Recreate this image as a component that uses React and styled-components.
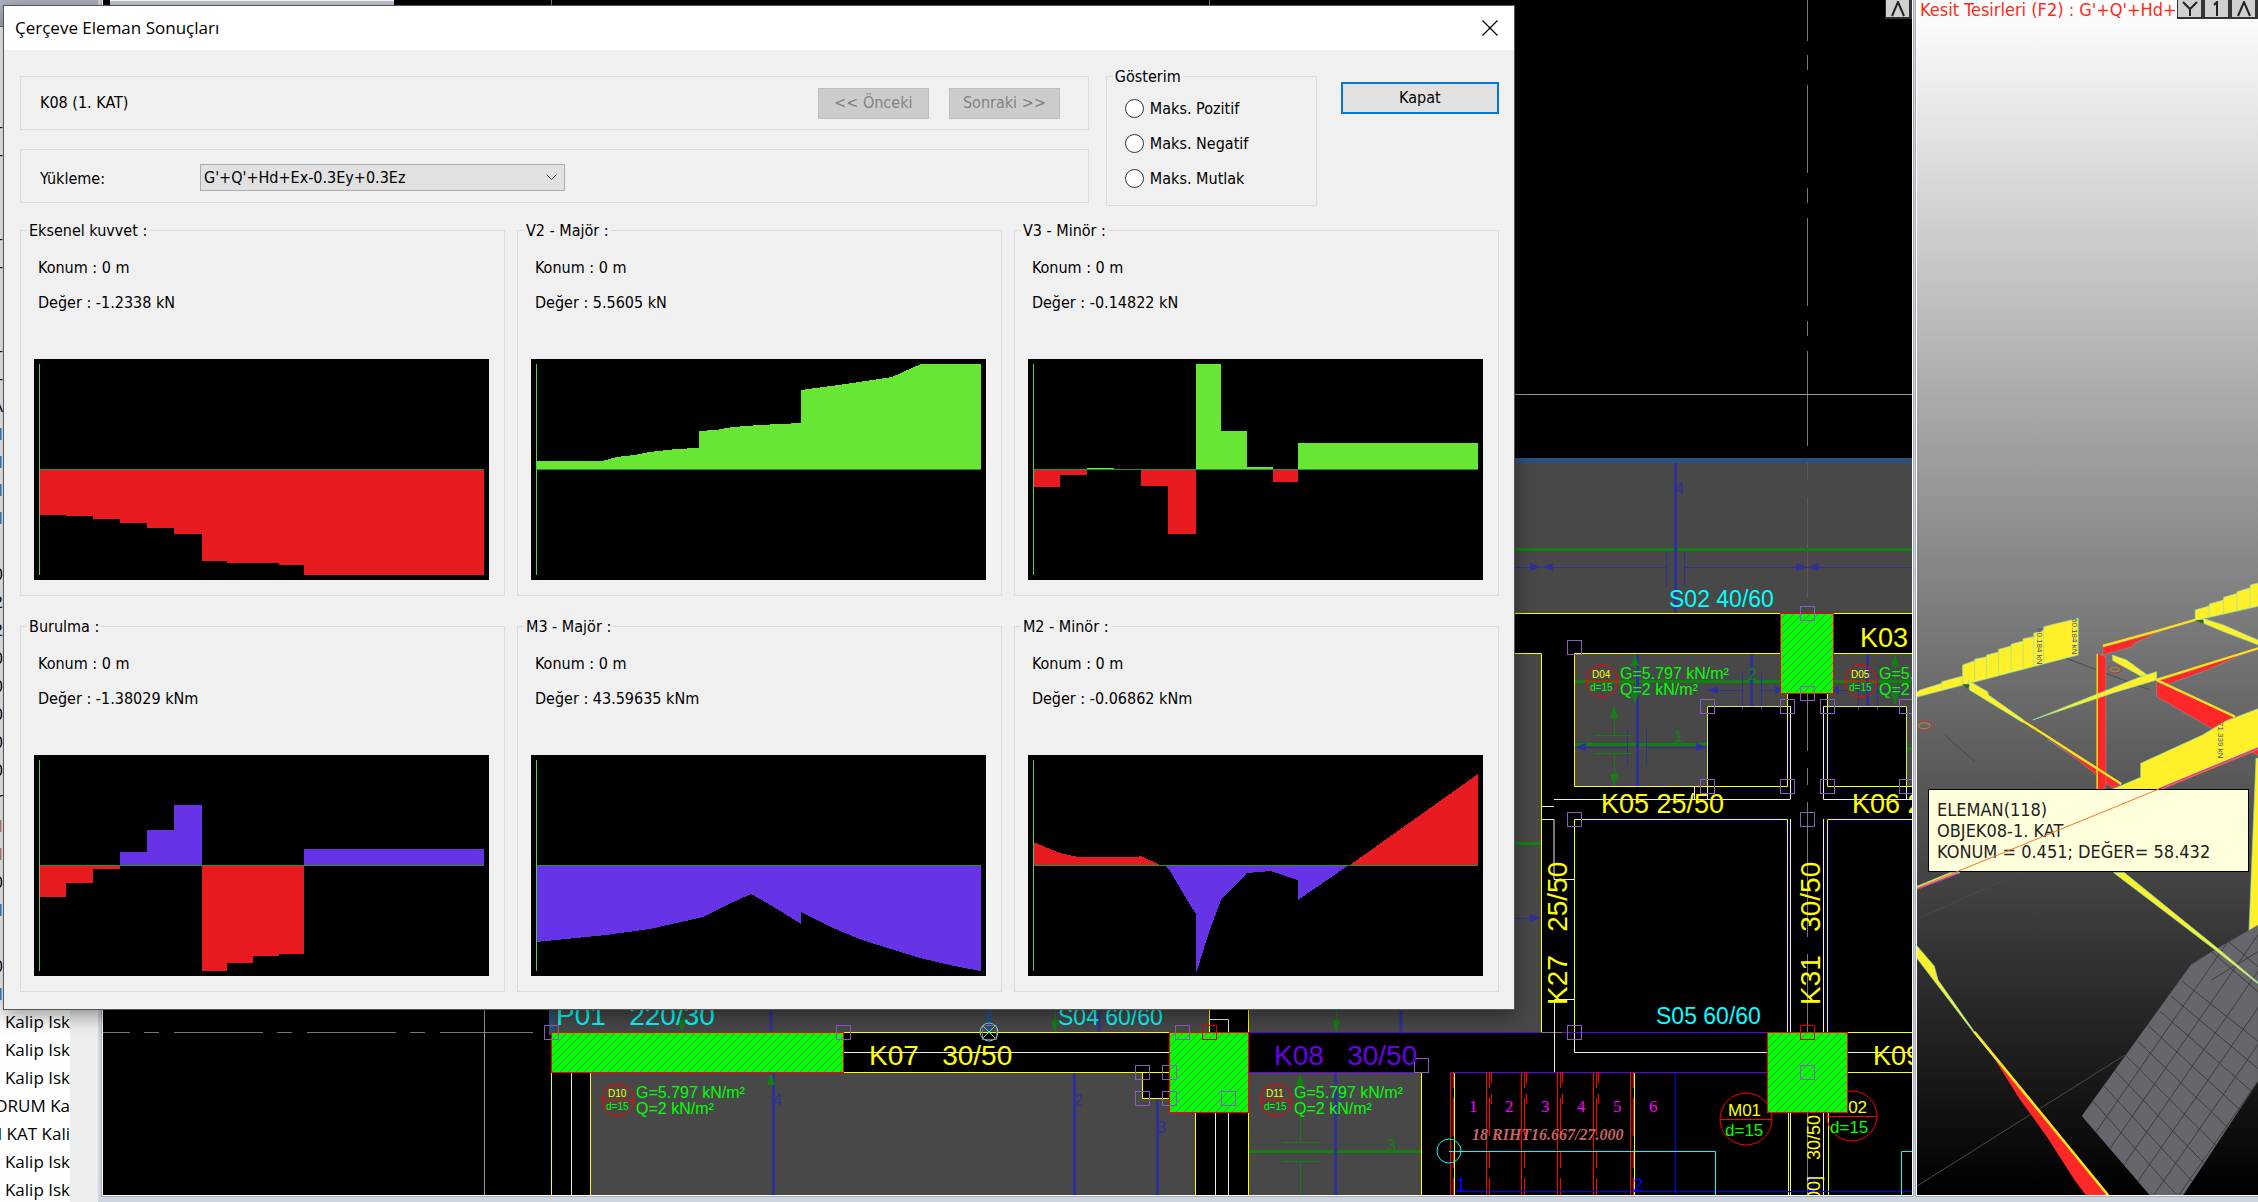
import React, { useState } from 'react'
import styled, { createGlobalStyle } from 'styled-components'

const tahoma = "'DejaVu Sans Condensed', 'DejaVu Sans', sans-serif"
const segoe = "'Open Sans', 'Noto Sans', sans-serif"
const arial = "'Liberation Sans', Arial, sans-serif"
const times = "'Liberation Serif', 'Times New Roman', serif"

const RED = '#e81b21'
const GREEN = '#67e733'
const PURPLE = '#6633e6'

// chart areas, [color, polygon points], zero axis is y = 110
const steps = (color, list) =>
  list.map(([x1, x2, y]) => [color, `${x1},110 ${x1},${y} ${x2},${y} ${x2},110`])

const groups = [
  {
    title: 'Eksenel kuvvet :',
    value: '-1.2338 kN',
    areas: steps(RED, [
      [5, 32, 156], [32, 59, 157], [59, 86, 160], [86, 113, 164], [113, 140, 169],
      [140, 168, 175], [168, 193, 202], [193, 245, 204], [245, 270, 206], [270, 450, 216],
    ]),
  },
  {
    title: 'V2 - Majör :',
    value: '5.5605 kN',
    areas: [
      [
        GREEN,
        '5,110 5,102 71,102 86,98 103,96 119,93 145,90 168,89 168,72 185,71 202,68 229,66 270,64 270,31 315,25 361,18 390,5 450,5 450,110',
      ],
    ],
  },
  {
    title: 'V3 - Minör :',
    value: '-0.14822 kN',
    areas: [
      ...steps(RED, [[5, 32, 128], [32, 59, 116], [113, 140, 127], [140, 168, 175], [245, 270, 123]]),
      ...steps(GREEN, [[59, 86, 109], [168, 193, 5], [193, 219, 72], [219, 245, 108], [270, 450, 84]]),
    ],
  },
  {
    title: 'Burulma :',
    value: '-1.38029 kNm',
    areas: [
      ...steps(RED, [
        [5, 32, 142], [32, 59, 128], [59, 86, 114],
        [168, 193, 216], [193, 219, 208], [219, 245, 201], [245, 270, 199],
      ]),
      ...steps(PURPLE, [[86, 113, 97], [113, 140, 75], [140, 168, 50], [270, 450, 94]]),
    ],
  },
  {
    title: 'M3 - Majör :',
    value: '43.59635 kNm',
    areas: [
      [
        PURPLE,
        '5,110 5,187 75,180 119,174 172,162 196,150 220,139 229,144 246,154 270,169 270,157 302,173 331,185 389,203 423,211 450,216 450,110',
      ],
    ],
  },
  {
    title: 'M2 - Minör :',
    value: '-0.06862 kNm',
    areas: [
      [RED, '5,110 5,87 32,98 50,102 110,102 113,101 132,110'],
      [
        PURPLE,
        '136,110 141,114 159,145 168,159 168,216 169,216 180,180 193,145 219,118 243,116 270,125 270,145 321,110',
      ],
      [RED, '322,110 450,19 450,110'],
    ],
  },
]

const treeRows = [
  ['-'], ['-'], [''], [''], ['-'], ['-'], [''], [''], ['-'], ['-'], ['A'],
  ['I', '#2a7ad0'], ['I', '#2a7ad0'], ['I', '#2a7ad0'], ['I', '#2a7ad0'], [''],
  ['0'], ['2'], ['2'], ['0'], ['0'], ['0'], ['0'], ['0'], ['r'],
  ['I', '#d08040'], ['I', '#d08040'], ['0'], ['I', '#2a7ad0'], [''], ['0'], ['I', '#2a7ad0'],
]
const treeLabels = ['Kalip Isk', 'Kalip Isk', 'Kalip Isk', 'ORUM Ka', 'I KAT Kali', 'Kalip Isk', 'Kalip Isk']

function Chart({ areas, title }) {
  return (
    <ChartSvg viewBox="0 0 455 221" preserveAspectRatio="none" role="img" aria-label={title}>
      {areas.map(([color, points], index) => (
        <polygon key={index} fill={color} points={points} />
      ))}
      <rect x="5" y="110" width="445" height="1" fill="#2f8f2f" />
      <rect x="5" y="5" width="1" height="211" fill="#58c858" />
    </ChartSvg>
  )
}

function ResultsDialog() {
  const [display, setDisplay] = useState('')
  return (
    <Dialog role="dialog" aria-label="Çerçeve Eleman Sonuçları">
      <TitleBar>
        <span>Çerçeve Eleman Sonuçları</span>
        <CloseButton aria-label="Close">
          <svg width="16" height="16" viewBox="0 0 16 16" stroke="#000" strokeWidth="1.2">
            <path d="M0.5 0.5L15.5 15.5M15.5 0.5L0.5 15.5" />
          </svg>
        </CloseButton>
      </TitleBar>
      <Body>
        <Header>
          <Boxes>
            <Box>
              <BoxTitle>K08 (1. KAT)</BoxTitle>
              <Pager>
                <Button disabled>&lt;&lt; Önceki</Button>
                <Button disabled>Sonraki &gt;&gt;</Button>
              </Pager>
            </Box>
            <Box $low>
              <LoadLabel htmlFor="load">Yükleme:</LoadLabel>
              <SelectWrap>
                <Select id="load">
                  <option>G'+Q'+Hd+Ex-0.3Ey+0.3Ez</option>
                </Select>
                <svg width="11" height="7" viewBox="0 0 11 7" fill="none" stroke="#444">
                  <path d="M0.5 0.5L5.5 5.5L10.5 0.5" />
                </svg>
              </SelectWrap>
            </Box>
          </Boxes>
          <Group>
            <legend>Gösterim</legend>
            <Radios>
              {['Maks. Pozitif', 'Maks. Negatif', 'Maks. Mutlak'].map((name) => (
                <RadioLabel key={name}>
                  <input
                    type="radio"
                    name="display"
                    checked={display === name}
                    onChange={() => setDisplay(name)}
                  />
                  {name}
                </RadioLabel>
              ))}
            </Radios>
          </Group>
          <DefaultButton>Kapat</DefaultButton>
        </Header>
        <Results>
          {groups.map(({ title, value, areas }) => (
            <Group key={title}>
              <legend>{title}</legend>
              <Readout>
                <p>Konum : 0 m</p>
                <p>Değer : {value}</p>
              </Readout>
              <Chart areas={areas} title={title} />
            </Group>
          ))}
        </Results>
      </Body>
    </Dialog>
  )
}

// plan drawing helpers
const Lines = ({ color, width = 1, d, dash }) => (
  <path d={d} stroke={color} strokeWidth={width} strokeDasharray={dash} fill="none" />
)
const Handles = ({ color = '#8a5cc0', at }) =>
  at.map(([x, y]) => (
    <rect key={`${x}-${y}`} x={x - 7} y={y - 7} width="14" height="14" fill="none" stroke={color} />
  ))
const Column = ({ x, y, w, h }) => (
  <>
    <rect x={x} y={y} width={w} height={h} fill="#00ff00" />
    <rect x={x} y={y} width={w} height={h} fill="url(#hatch)" stroke="#ff0000" />
  </>
)
const SlabTag = ({ x, y, name }) => (
  <>
    <circle cx={x} cy={y} r="16" fill="none" stroke="#ff0000" />
    <Lines color="#ff0000" d={`M${x - 16} ${y}h32`} />
    <Label x={x - 10} y={y - 3} size={10} fill="#ffff00">{name}</Label>
    <Label x={x - 12} y={y + 10} size={10} fill="#00ff00">d=15</Label>
    <Label x={x + 18} y={y - 2} size={16} fill="#00ff00">G=5.797 kN/m²</Label>
    <Label x={x + 18} y={y + 14} size={16} fill="#00ff00">Q=2 kN/m²</Label>
  </>
)
const arrow = {
  right: (x, y) => `M${x} ${y}l-11 -4v8z`,
  left: (x, y) => `M${x} ${y}l11 -4v8z`,
  down: (x, y) => `M${x} ${y}l-4 -12h8z`,
  up: (x, y) => `M${x} ${y}l-4 12h8z`,
}

function PlanDrawing() {
  const stair = [1450, 1486, 1521, 1557, 1593, 1630]
  return (
    <DrawingSvg viewBox="103 0 1809 1195" preserveAspectRatio="xMinYMin slice">
      <defs>
        <pattern id="hatch" width="8" height="8" patternUnits="userSpaceOnUse">
          <path d="M-1 9L9 -1M-1 1L1 -1M7 9L9 7" stroke="#6f7f6f" />
        </pattern>
      </defs>
      <g fill="#484848">
        <rect x="1500" y="460" width="412" height="153" />
        <rect x="1500" y="653" width="41" height="379" />
        <rect x="552" y="990" width="989" height="42" />
        <path d="M1574 653H1787V706H1707V786H1574zM1827 653H1912V786H1907V706H1827z" />
        <path d="M590 1072H1142V1098H1195V1195H590zM1248 1072H1421V1195H1248z" />
      </g>
      <rect x="1209" y="990" width="39" height="42" fill="#000" />
      <rect x="1500" y="458" width="412" height="5" fill="#2a5080" />
      <rect x="549" y="990" width="5" height="45" fill="#2a5080" />
      <rect x="986" y="990" width="6" height="45" fill="#2a5080" />
      {/* axes */}
      <Lines
        color="#777"
        d="M1807.5 0V41M1807.5 55V70M1807.5 85V173M1807.5 188V203M1807.5 218V306M1807.5 321V336M1807.5 351V446M1807.5 694V751M1807.5 768V785M1807.5 802V937M1807.5 954V1032M1807.5 1112V1195M551.5 0V6M1209.5 0V6"
      />
      <Lines color="#5c5c5c" d="M1807.5 463V480M1807.5 497V598" />
      <Lines
        color="#777"
        d="M103 1032.5H130M144 1032.5H159M174 1032.5H263M277 1032.5H292M307 1032.5H396M410 1032.5H425M440 1032.5H533M1541 1032.5H1562"
      />
      <Lines color="#999" d="M1500 394.5H1912M484.5 990V1195M1209.5 1112V1195" />
      {/* rebar */}
      <Lines
        color="#138013"
        width={3}
        d="M1500 549.5H1912M1574 681.5H1780M1834 681.5H1912M1574 744.5H1708M1500 843.5H1542M1248 1151.5H1421M1907 748.5H1912"
      />
      <Lines
        color="#30309a"
        width={3}
        d="M1675.5 463V613M1637.5 653V787M1751.5 653V706M1867.5 653V706M771 990V1032M1099 990V1032M1401 990V1032M773.5 1072V1195M1074.5 1072V1195M1157.5 1098V1195M1335.5 1072V1195"
      />
      <Lines
        color="#30309a"
        d="M1666.5 551V587M1684.5 551V587M1500 567.5H1667M1685 567.5H1912M1742.5 673V710M1761.5 673V710M1858.5 673V710M1877.5 673V710M1707 690.5H1742M1761 690.5H1780M1834 690.5H1858M1877 690.5H1912M1627.5 729V766M1646.5 729V766M1574 747.5H1627M1646 747.5H1707M1500 918.5H1541"
      />
      <Lines
        color="#138013"
        d="M1614.5 706V735M1614.5 753V786M1595 735.5H1633M1595 753.5H1633M1635.5 655V703M1895.5 655V704M1055.5 990V1032M682.5 990V1032M1336.5 990V1032M1300.5 1072V1142M1300.5 1161V1195M1282 1142.5H1319M1282 1161.5H1319"
      />
      <path
        fill="#30309a"
        d={[
          arrow.right(1541, 567), arrow.left(1542, 567), arrow.right(1807, 567), arrow.left(1808, 567),
          arrow.left(1707, 690), arrow.right(1786, 690), arrow.left(1828, 690),
          arrow.left(1575, 747), arrow.right(1707, 747), arrow.right(1541, 918),
        ].join('')}
      />
      <path
        fill="#138013"
        d={[
          arrow.up(1614, 706), arrow.down(1614, 786), arrow.up(1635, 654), arrow.down(1635, 704),
          arrow.up(1895, 654), arrow.down(1895, 705), arrow.down(1055, 1032), arrow.down(682, 1032),
          arrow.down(1336, 1032), arrow.up(1300, 1073), arrow.up(771, 1073),
        ].join('')}
      />
      <Label x="1675" y="494" size={16} fill="#30309a">4</Label>
      <Label x="1674" y="742" size={16} fill="#138013">1</Label>
      <Label x="1748" y="680" size={16} fill="#138013">2</Label>
      <Label x="773" y="1106" size={16} fill="#30309a">4</Label>
      <Label x="1074" y="1106" size={16} fill="#30309a">2</Label>
      <Label x="1157" y="1133" size={16} fill="#30309a">3</Label>
      <Label x="1336" y="1106" size={16} fill="#30309a">2</Label>
      <Label x="1387" y="1151" size={16} fill="#138013">3</Label>
      {/* beams */}
      <rect x="844" y="1033" width="326" height="39" fill="#000" />
      <rect x="1248" y="1033" width="520" height="39" fill="#000" />
      <rect x="1196" y="1112" width="52" height="83" fill="#000" />
      <Lines
        color="#eee"
        d="M1790.5 706V799.5M1554 799.5H1790M1823.5 706V799.5H1912M1707.5 786V799M1694.5 786V799M1906.5 786V799M1542 806.5H1554M1542 819.5H1554V879.5H1574M1790.5 819V1032M1823.5 819V1032M1574 999.5H1554.5V1072M1574.5 1032V1052.5H1767M1848 1052.5H1912M1790.5 1112V1195M1823.5 1112V1195M571.5 1072V1195M844 1052.5H1169M1209 1019.5H1228.5V1032M1215.5 1112V1195M1228.5 1112V1195"
      />
      <Lines
        color="#ffff00"
        d="M1500 613.5H1780M1834 613.5H1912M1500 653.5H1541.5V1032M1780 653.5H1574.5V786.5H1787.5V694M1834 653.5H1912M1827.5 694V786.5H1912M1574.5 1032V819.5H1787.5V1032M1827.5 1032V819.5H1912M1848 1032.5H1912M1848 1072.5H1912M1788.5 1112V1195M1828.5 1112V1195M551.5 1072V1195M590.5 1072V1195M844 1032.5H1169M844 1072.5H1169M1142.5 1072V1098.5H1169M1195.5 1112V1195M1248.5 990V1032M1248.5 1072V1195M1209.5 990V1032M1421.5 1072V1195M1454.5 1072V1195M1634.5 1072V1195"
      />
      <Lines color="#d4e860" d="M1707.5 786V706.5H1790M1823 706.5H1906.5V786" />
      <Lines color="#6a00e8" d="M1248 1032.5H1541M1562 1032.5H1767M1248 1072.5H1421M1450 1072.5H1767" />
      {/* stairs */}
      <Lines color="#ff0000" d={stair.map((x) => `M${x}.5 1072V1195`).join('')} />
      <Lines color="#ff0000" dash="16 10 38 16" d={stair.map((x) => `M${x + 3}.5 1072V1195`).join('')} />
      <Lines color="#ff0000" d={stair.slice(1, 5).map((x) => `M${x + 5}.5 1072V1083M${x + 5}.5 1094V1104`).join('')} />
      <Lines color="#0000ff" d="M1675.5 1072V1195M1455 1191.5H1912" />
      <Lines color="#00ffff" d="M1449 1151.5H1715.5V1195M1912 1151.5H1901.5V1195" />
      <circle cx="1449" cy="1151" r="12" fill="none" stroke="#00ffff" />
      {['1', '2', '3', '4', '5', '6'].map((n, index) => (
        <Label key={n} x={1469 + index * 36} y="1112" size={17} face={times} fill="#ff00ff">{n}</Label>
      ))}
      <Label x="1472" y="1140" size={16} face={times} slanted fill="#c86464">18 RIHT16.667/27.000</Label>
      <Label x="1456" y="1191" size={18} fill="#0000ff">1</Label>
      <Label x="1633" y="1191" size={18} fill="#0000ff">2</Label>
      <Label x="1807" y="1191" size={18} fill="#0000ff">2</Label>
      {/* slab tags */}
      <SlabTag x={1602} y={681} name="D04" />
      <SlabTag x={1861} y={681} name="D05" />
      <SlabTag x={618} y={1100} name="D10" />
      <SlabTag x={1276} y={1100} name="D11" />
      <circle cx="1746" cy="1119" r="26" fill="none" stroke="#ff0000" />
      <circle cx="1852" cy="1116" r="25" fill="none" stroke="#ff0000" />
      <Lines color="#ff0000" d="M1720 1119.5H1772M1827 1116.5H1877" />
      <Label x="1728" y="1116" size={17} fill="#ffff00">M01</Label>
      <Label x="1834" y="1113" size={17} fill="#ffff00">M02</Label>
      <Label x="1725" y="1136" size={17} fill="#00ff00">d=15</Label>
      <Label x="1830" y="1133" size={17} fill="#00ff00">d=15</Label>
      {/* columns */}
      <Column x={1780.5} y={613.5} w={53} h={80} />
      <Column x={1767.5} y={1032.5} w={80} h={80} />
      <Column x={551.5} y={1032.5} w={292} h={40} />
      <Column x={1169.5} y={1032.5} w={79} h={80} />
      <Handles
        at={[
          [1574.5, 647.5], [1807.5, 613.5], [1807.5, 693.5], [1707.5, 706.5], [1787.5, 706.5],
          [1827.5, 706.5], [1906.5, 706.5], [1707.5, 786.5], [1787.5, 786.5], [1827.5, 786.5],
          [1906.5, 786.5], [1574.5, 819.5], [1807.5, 819.5], [1574.5, 1032.5], [1807.5, 1072.5],
          [551.5, 1032.5], [843.5, 1032.5], [989.5, 1032.5], [1182.5, 1032.5], [1142.5, 1072.5],
          [1169.5, 1072.5], [1142.5, 1098.5], [1169.5, 1098.5], [1228.5, 1098.5], [1421.5, 1065.5],
        ]}
      />
      <Handles color="#e00000" at={[[1209.5, 1032.5], [1807.5, 1032.5]]} />
      <circle cx="989" cy="1032" r="9" fill="none" stroke="#70e0a0" />
      <Lines color="#70e0a0" d="M983 1026L995 1038M995 1026L983 1038" />
      {/* element names */}
      <Label x="1669" y="607" size={23} fill="#00ffff">S02 40/60</Label>
      <Label x="1656" y="1024" size={23} fill="#00ffff">S05 60/60</Label>
      <Label x="1058" y="1025" size={23} fill="#00ffff">S04 60/60</Label>
      <Label x="556" y="1025" size={28} fill="#00ffff">P01{'\u00a0\u00a0\u00a0'}220/30</Label>
      <Label x="1860" y="647" size={27} fill="#ffff00">K03</Label>
      <Label x="1601" y="813" size={27} fill="#ffff00">K05 25/50</Label>
      <Label x="1852" y="813" size={27} fill="#ffff00">K06 25/50</Label>
      <Label x="1873" y="1065" size={27} fill="#ffff00">K09</Label>
      <Label x="869" y="1065" size={28} fill="#ffff00">K07{'\u00a0\u00a0\u00a0'}30/50</Label>
      <Label x="1274" y="1065" size={28} fill="#6a00e8">K08{'\u00a0\u00a0\u00a0'}30/50</Label>
      <Label transform="translate(1567 1005) rotate(-90)" size={28} fill="#ffff00">
        K27{'\u00a0\u00a0\u00a0'}25/50
      </Label>
      <Label transform="translate(1820 1005) rotate(-90)" size={28} fill="#ffff00">
        K31{'\u00a0\u00a0\u00a0'}30/50
      </Label>
      <Label transform="translate(1820 1160) rotate(-90)" size={18} fill="#ffff00">30/50</Label>
      <Label transform="translate(1820 1201) rotate(-90)" size={18} fill="#ffff00">00]</Label>
    </DrawingSvg>
  )
}

function ForceView() {
  const rows = [1, 2, 3, 4, 5, 6, 7, 8, 9]
  return (
    <DrawingSvg viewBox="1917 0 341 1195" preserveAspectRatio="xMinYMin slice">
      <defs>
        <clipPath id="mesh">
          <polygon points="1427,315 1470,275 1566,195 1566,665 1412,1005 1342,1005 1202,768" />
        </clipPath>
      </defs>
      <g stroke="#4a4a4a" fill="none">
        <path d="M1917 919L2023 872M1917 1186L2125 1055M2060 656L2150 690M1945 735L1975 762" />
      </g>
      {/* upper frames */}
      <g transform="translate(1880 540) scale(0.3342 0.3333)">
        <g fill="#fff02a" stroke="#8fe0b0" strokeWidth="2">
          <path d="M108 472V458L120 450L185 430V425L247 408V375L283 362V358L319 350V345L355 336V328L392 318V313L428 303V296L460 290V280L490 270V260L593 235V345z" />
          <path d="M185 430V450M247 408V432M283 362V422M319 350V412M355 336V404M392 318V394M428 303V386M460 290V378M490 270V370" fill="none" />
          <path d="M265 422L322 455L325 465L430 540L428 548L268 450z" />
          <path d="M943 210L985 198V192L1028 180V172L1068 160V155L1108 143V135L1135 128V198L943 242z" />
          <path d="M985 198V232M1028 180V222M1068 160V212M1108 143V204" fill="none" />
          <path d="M965 235L1028 255L1135 302V316L1028 275L968 250z" />
          <path d="M695 345L738 360L800 405L780 408L697 362z" />
        </g>
        <g fill="#ff2828" stroke="#909090" strokeWidth="2">
          <path d="M500 598L722 732L695 745L630 690L585 655z" />
          <path d="M667 322L840 275L760 310L755 320L667 345z" />
          <path d="M828 425L1100 336L985 388L865 432z" />
          <path d="M828 425L1062 530L995 567L828 470z" />
          <path d="M650 340L676 350V750H648z" />
          <path d="M1110 635L1135 622V648z" />
        </g>
        <g fill="#fff02a" stroke="#8fe0b0" strokeWidth="2">
          <path d="M457 540L600 482L780 410L828 395V420L700 458z" />
          <path d="M780 670L965 585L1035 543L1135 505V625L835 748H695L780 712z" />
          <path d="M1125 655H1135V1170L1103 1200z" />
        </g>
        <g fill="none" stroke="#ffdf20" strokeWidth="7">
          <path d="M428 543L722 732M667 318L830 273L943 240M828 420L1135 324M828 420L1062 530" />
          <path d="M650 342V750" strokeWidth="4" />
        </g>
        <path d="M245 432L268 434L262 446zM943 240H968V252z" fill="#256b25" />
        <path d="M835 748L1135 624" stroke="#c040c0" strokeWidth="7" />
        <path d="M835 750L1135 627" stroke="#ff7020" strokeWidth="3" />
        <g fill="none" strokeWidth="3">
          <ellipse cx="702" cy="388" rx="22" ry="10" stroke="#b04040" />
          <ellipse cx="702" cy="388" rx="14" ry="7" stroke="#a09040" />
          <ellipse cx="136" cy="557" rx="26" ry="13" stroke="#b04040" />
          <ellipse cx="132" cy="557" rx="17" ry="9" stroke="#a09040" />
        </g>
      </g>
      <Label transform="translate(2037 628) rotate(90)" size={8} fill="#4a4a80">60.184 kN</Label>
      <Label transform="translate(2072 618) rotate(90)" size={8} fill="#4a4a80">60.184 kN</Label>
      <Label transform="translate(2218 722) rotate(90)" size={8} fill="#4a4a80">71.339 kN</Label>
      {/* lower frames and the raft mesh */}
      <g transform="translate(1500 860) scale(0.484 0.3333)">
        <path d="M1427 315L1470 275L1566 195V665L1412 1005H1342L1202 768z" fill="#66676d" />
        <g clipPath="url(#mesh)" stroke="#333" strokeWidth="2">
          {rows.map((i) => (
            <path key={i} d={`M${1202 + i * 23} ${768 - i * 45}l200 ${338 - i * 12}`} />
          ))}
          {rows.map((i) => (
            <path key={i} d={`M${1202 + i * 29} ${768 + i * 49}l310 -650`} />
          ))}
          <path d="M1470 275L1566 395M1505 245L1566 320M1470 360L1566 275" />
        </g>
        <g fill="#fff02a" stroke="#8fe0b0" strokeWidth="2">
          <path d="M860 80L930 38H950L860 88z" />
          <path d="M1268 38H1290L1480 262L1570 372V376L1478 270z" />
          <path d="M860 255L897 318L905 360L980 515L1025 600L980 520L860 292z" />
        </g>
        <path d="M1018 588L1075 680L1130 775L1187 880L1254 1005H1210L1187 960L1130 830L1075 720z" fill="#ff2828" />
        <path d="M980 515L1256 1005" stroke="#ffe820" strokeWidth="6" />
        <path d="M860 88L946 40" stroke="#c040c0" strokeWidth="4" />
      </g>
    </DrawingSvg>
  )
}

const Glyph = ({ d }) => (
  <svg width="18" height="16" viewBox="0 0 18 16" fill="none" stroke="#222" strokeWidth="2">
    <path d={d} />
  </svg>
)

export default function App() {
  return (
    <>
      <GlobalStyle />
      <Workspace>
        <Sidebar>
          <SidebarHeader />
          <Tree>
            {treeRows.map(([text, color], index) => (
              <TreeRow key={index} $color={color} $narrow>{text}</TreeRow>
            ))}
            {treeLabels.map((text, index) => (
              <TreeRow key={index}>{text}</TreeRow>
            ))}
          </Tree>
        </Sidebar>
        <Pane>
          <PlanDrawing />
          <TabStrip />
          <PaneButtons>
            <PaneButton aria-label="Expand plan"><Glyph d="M3 15L9 1L15 15" /></PaneButton>
          </PaneButtons>
        </Pane>
        <Pane $shaded>
          <ForceView />
          <ViewTitle>Kesit Tesirleri (F2) : G'+Q'+Hd+E</ViewTitle>
          <PaneButtons>
            <PaneButton aria-label="Filter"><Glyph d="M2 1L9 8L16 1M9 8V15" /></PaneButton>
            <PaneButton aria-label="View one"><Glyph d="M6 4L9 1V15" /></PaneButton>
            <PaneButton aria-label="Expand view"><Glyph d="M3 15L9 1L15 15" /></PaneButton>
          </PaneButtons>
          <Tooltip role="tooltip">
            <p>ELEMAN(118)</p>
            <p>OBJEK08-1. KAT</p>
            <p>KONUM = 0.451; DEĞER= 58.432</p>
          </Tooltip>
          <Overlay viewBox="1917 0 341 1195" preserveAspectRatio="xMinYMin slice">
            <path d="M1917 888L2159 789" stroke="#ff7020" />
          </Overlay>
        </Pane>
      </Workspace>
      <ResultsDialog />
    </>
  )
}

const GlobalStyle = createGlobalStyle`
  * {
    box-sizing: border-box;
  }
  body {
    margin: 0;
    overflow: hidden;
    background: #cfd5df;
    color: #000;
    font: 16px/20px ${tahoma};
  }
  p {
    margin: 0;
  }
`
const Workspace = styled.main`
  display: grid;
  grid-template-columns: 98px 1fr 341px;
  column-gap: 5px;
  height: 100vh;
  overflow: hidden;
  background: #cfd5df;
`
const Sidebar = styled.aside`
  overflow: hidden;
  background: #eee;
`
const SidebarHeader = styled.div`
  height: 27px;
  background: #aab2be;
  border-bottom: 1px solid #777;
`
const Tree = styled.div`
  width: 70px;
  padding-top: 85px;
  background: #fff;
`
const TreeRow = styled.div`
  display: flex;
  justify-content: flex-end;
  width: ${(props) => (props.$narrow ? '3px' : '70px')};
  height: 28px;
  overflow: hidden;
  color: ${(props) => props.$color || '#000'};
  font: 17px/28px ${segoe};
  white-space: nowrap;
`
const Pane = styled.section`
  position: relative;
  height: calc(100vh - 7px);
  overflow: hidden;
  background: ${(props) => (props.$shaded ? 'linear-gradient(#fff, #000)' : '#000')};
  outline: 1px solid #fff;
  box-shadow: 0 0 0 2px #a5adb9;
`
const DrawingSvg = styled.svg`
  display: block;
  width: 100%;
  height: 100%;
`
const Label = styled.text`
  font-family: ${(props) => props.face || arial};
  font-size: ${(props) => props.size}px;
  font-style: ${(props) => (props.slanted ? 'italic' : 'normal')};
  font-weight: ${(props) => (props.slanted ? 700 : 400)};
`
const Overlay = styled(DrawingSvg)`
  position: absolute;
  inset: 0;
  pointer-events: none;
`
const TabStrip = styled.div`
  position: absolute;
  top: 0;
  left: 7px;
  width: 284px;
  height: 6px;
  background: #c3cad6;
  border-top: 1px solid #fff;
`
const ViewTitle = styled.div`
  position: absolute;
  top: 0;
  left: 3px;
  color: #ff2a1a;
  font-size: 18px;
  white-space: nowrap;
`
const PaneButtons = styled.div`
  position: absolute;
  top: 0;
  right: 0;
  display: flex;
`
const PaneButton = styled.button`
  display: flex;
  align-items: center;
  justify-content: center;
  width: 27px;
  height: 19px;
  padding: 0;
  background: #d0d0d0;
  border: 1px solid #333;
  border-width: 0 3px 2px 1px;
`
const Tooltip = styled.div`
  position: absolute;
  top: 789px;
  left: 11px;
  right: 9px;
  padding: 9px 8px;
  background: #ffffdc;
  border: 1px solid #000;
  color: #222;
  font-size: 18px;
  line-height: 21px;
  white-space: nowrap;
`
const Dialog = styled.div`
  position: absolute;
  top: 5px;
  left: 3px;
  width: calc(67vw - 1px);
  background: #f0f0f0;
  border: 1px solid #555;
  box-shadow: 0 6px 18px rgba(0, 0, 0, 0.4);
`
const TitleBar = styled.header`
  display: flex;
  align-items: center;
  justify-content: space-between;
  height: 44px;
  padding: 0 16px 0 11px;
  background: #fff;
  font: 17px/24px ${segoe};
`
const CloseButton = styled.button`
  display: flex;
  padding: 0;
  background: none;
  border: 0;
`
const Body = styled.div`
  padding: 16px 15px 17px 16px;
`
const Header = styled.div`
  display: grid;
  grid-template-columns: 1fr 211px 165px;
  column-gap: 17px;
  margin-bottom: 14px;
`
const Boxes = styled.div`
  display: flex;
  flex-direction: column;
  gap: 19px;
  padding-top: 10px;
`
const Box = styled.section`
  display: flex;
  align-items: center;
  height: 54px;
  padding: ${(props) => (props.$low ? '3px' : 0)} 28px 0 19px;
  border: 1px solid #dcdcdc;
`
const BoxTitle = styled.span`
  flex: 1;
`
const Pager = styled.div`
  display: flex;
  gap: 20px;
`
const Button = styled.button`
  width: 111px;
  height: 31px;
  padding: 0;
  background: #ccc;
  border: 1px solid #bfbfbf;
  color: #838383;
  font: inherit;
`
const DefaultButton = styled(Button)`
  justify-self: end;
  width: 158px;
  height: 32px;
  margin-top: 16px;
  background: #e1e1e1;
  border: 2px solid #0078d7;
  color: #000;
`
const LoadLabel = styled.label`
  width: 160px;
  padding-top: 2px;
`
const SelectWrap = styled.div`
  display: grid;
  align-items: center;
  width: 365px;
  > * {
    grid-area: 1 / 1;
  }
  svg {
    justify-self: end;
    margin-right: 8px;
    pointer-events: none;
  }
`
const Select = styled.select`
  appearance: none;
  width: 100%;
  height: 27px;
  padding: 0 3px;
  background: #e1e1e1;
  border: 1px solid #adadad;
  border-radius: 0;
  color: #000;
  font: inherit;
`
const Group = styled.fieldset`
  min-width: 0;
  margin: 0;
  padding: 0;
  border: 1px solid #dcdcdc;
  legend {
    height: 20px;
    margin-left: 6px;
    padding: 0 2px;
    line-height: 22px;
  }
`
const Radios = styled.div`
  padding: 5px 0 9px 18px;
`
const RadioLabel = styled.label`
  display: flex;
  align-items: center;
  gap: 6px;
  height: 35px;
  input {
    appearance: none;
    width: 19px;
    height: 19px;
    margin: 0;
    background: #fff;
    border: 1px solid #333;
    border-radius: 50%;
  }
  input:checked {
    background: radial-gradient(#333 35%, #fff 40%);
  }
`
const Results = styled.div`
  display: grid;
  grid-template-columns: repeat(3, 1fr);
  gap: 20px 12px;
`
const Readout = styled.div`
  padding: 10px 0 39px 17px;
  line-height: 35px;
`
const ChartSvg = styled.svg`
  display: block;
  width: calc(100% - 28px);
  height: 221px;
  margin: 0 15px 15px 13px;
  background: #000;
  shape-rendering: crispEdges;
`
